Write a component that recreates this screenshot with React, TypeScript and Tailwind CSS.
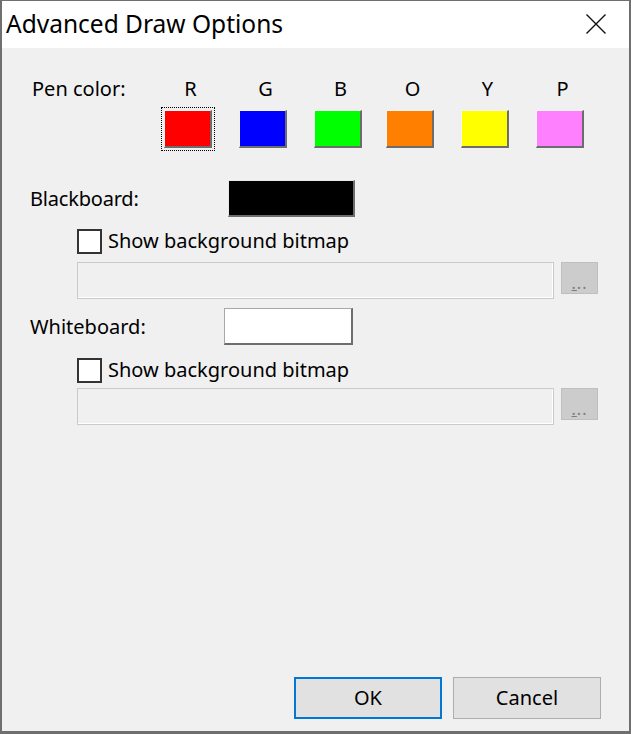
import React from "react";

const FONT = { fontFamily: '"Noto Sans", "Open Sans", sans-serif' };

function Swatch({ color, focused }: { color: string; focused?: boolean }) {
  return (
    <div
      className={
        "w-[48px] h-[38px] mt-[8px] border-t border-l border-t-[#f4f4f4] border-l-[#f4f4f4] border-b-2 border-r-2 border-b-[#6d6d6d] border-r-[#6d6d6d] " +
        color +
        (focused ? " outline-1 outline-dotted outline-black outline-offset-[2px]" : "")
      }
    />
  );
}

function Column({ label, color, focused, ml }: { label: string; color: string; focused?: boolean; ml: string }) {
  return (
    <div className={"flex flex-col items-center w-[48px] " + ml}>
      <div className="h-[26px] leading-[26px] pl-[5px]">{label}</div>
      <Swatch color={color} focused={focused} />
    </div>
  );
}

function Checkbox({ mt }: { mt: string }) {
  return (
    <div className={"flex items-center pl-[75px] h-[26px] " + mt}>
      <div className="w-[25px] h-[25px] border-2 border-[#333333] bg-white" />
      <span className="ml-[6px] leading-[26px]">Show background bitmap</span>
    </div>
  );
}

function FileRow({ mt }: { mt: string }) {
  return (
    <div className={"flex items-start pl-[75px] " + mt}>
      <div className="w-[477px] h-[37px] border border-[#cacaca] bg-[#f0f0f0] shadow-[inset_-1px_-1px_0_#ffffff]" />
      <div className="ml-[7px] w-[37px] h-[32px] bg-[#cccccc] border border-[#bfbfbf] flex items-end justify-center pb-[3px]">
        <span className="text-[16px] leading-[14px] text-[#7c7c7c] tracking-[1px]">
          <span className="underline">.</span>..
        </span>
      </div>
    </div>
  );
}

export default function App() {
  return (
    <div
      className="w-[631px] h-[734px] bg-[#f0f0f0] border-l-2 border-r-2 border-t border-b-[3px] border-[#6f6f6f] flex flex-col text-black text-[20px]"
      style={FONT}
    >
      {/* Title bar */}
      <div className="h-[47px] bg-white flex items-center justify-between pl-[4px] pr-[23px] shrink-0">
        <span className="text-[24.5px] leading-[33px] pb-[2px]">Advanced Draw Options</span>
        <svg width="20" height="20" viewBox="0 0 20 20" className="mt-[-1px]">
          <path d="M0.5 0.5 L19.5 19.5 M19.5 0.5 L0.5 19.5" stroke="#111" strokeWidth="1.4" fill="none" />
        </svg>
      </div>

      {/* Body */}
      <div className="flex-1 flex flex-col">
        {/* Pen color row */}
        <div className="flex items-start mt-[28px] pl-[30px]">
          <div className="w-[132px] h-[26px] leading-[26px]">Pen color:</div>
          <Column label="R" color="bg-[#ff0000]" focused ml="ml-0" />
          <Column label="G" color="bg-[#0000ff]" ml="ml-[27px]" />
          <Column label="B" color="bg-[#00ff00]" ml="ml-[27px]" />
          <Column label="O" color="bg-[#ff8000]" ml="ml-[24px]" />
          <Column label="Y" color="bg-[#ffff00]" ml="ml-[27px]" />
          <Column label="P" color="bg-[#ff80ff]" ml="ml-[27px]" />
        </div>

        {/* Blackboard */}
        <div className="flex items-center mt-[32px] pl-[28px]">
          <div className="w-[198px] leading-[26px] tracking-[-0.2px]">Blackboard:</div>
          <div className="w-[127px] h-[37px] bg-black border-t border-l border-[#e8e8e8] border-b-2 border-r-2 border-b-[#6d6d6d] border-r-[#6d6d6d]" />
        </div>
        <Checkbox mt="mt-[11px]" />
        <FileRow mt="mt-[8px]" />

        {/* Whiteboard */}
        <div className="flex items-center mt-[9px] pl-[28px]">
          <div className="w-[194px] leading-[26px]">Whiteboard:</div>
          <div className="w-[129px] h-[37px] bg-white border-t border-l border-t-[#a8a8a8] border-l-[#a8a8a8] border-b-2 border-r-2 border-b-[#6d6d6d] border-r-[#6d6d6d]" />
        </div>
        <Checkbox mt="mt-[12px]" />
        <FileRow mt="mt-[5px]" />

        <div className="flex-1" />

        {/* Buttons */}
        <div className="flex justify-end gap-[11px] pr-[28px] pb-[12px]">
          <button className="w-[148px] h-[42px] bg-[#e1e1e1] border-2 border-[#0078d7] flex items-center justify-center leading-[26px]">
            OK
          </button>
          <button className="w-[148px] h-[42px] bg-[#e1e1e1] border border-[#adadad] flex items-center justify-center leading-[26px]">
            Cancel
          </button>
        </div>
      </div>
    </div>
  );
}
